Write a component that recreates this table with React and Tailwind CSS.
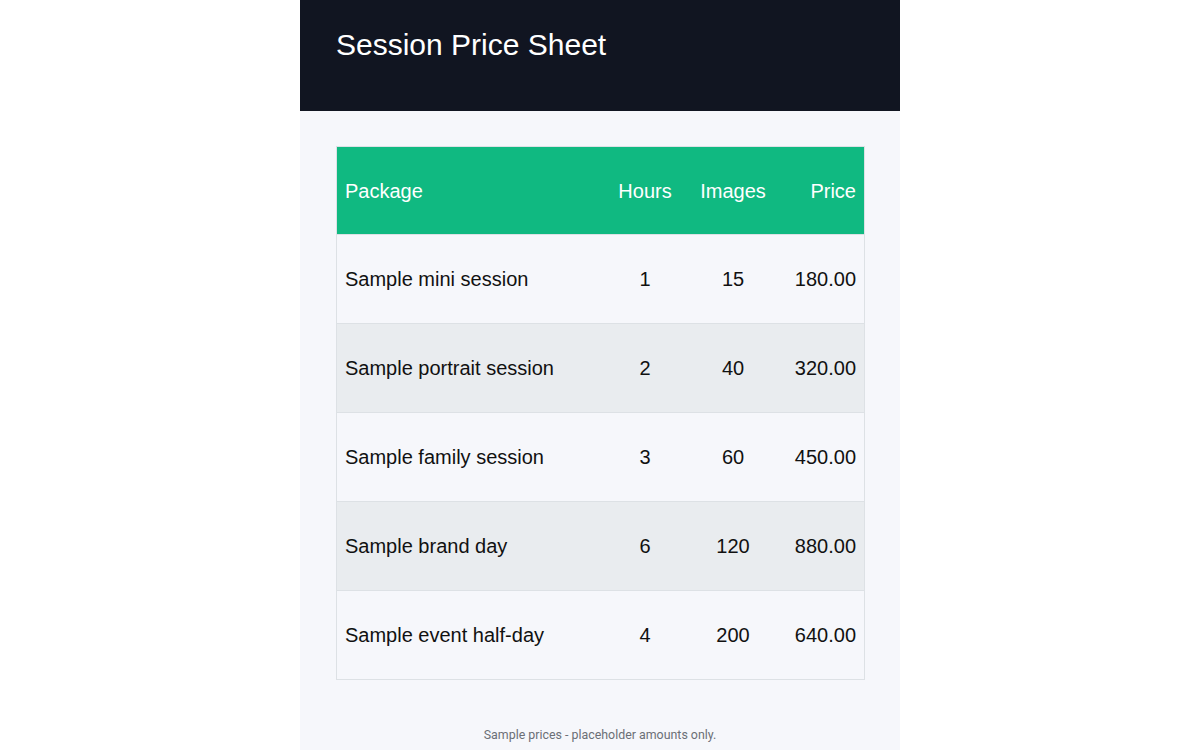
import React from "react";

const rows = [
  { name: "Sample mini session", hours: "1", images: "15", price: "180.00" },
  { name: "Sample portrait session", hours: "2", images: "40", price: "320.00" },
  { name: "Sample family session", hours: "3", images: "60", price: "450.00" },
  { name: "Sample brand day", hours: "6", images: "120", price: "880.00" },
  { name: "Sample event half-day", hours: "4", images: "200", price: "640.00" },
];

const App = () => {
  return (
    <div className="min-h-screen bg-white font-['Liberation_Sans',Arial,sans-serif]">
      <div className="mx-auto w-[600px] bg-[#f6f7fb] min-h-[800px]">
        <header className="bg-[#111521] h-[111px] px-9 pt-[26px]">
          <h1 className="text-white text-[30px] leading-[38px]">Session Price Sheet</h1>
        </header>

        <div className="px-9 pt-[35px]">
          <table className="w-full border-collapse border border-[#dde1e5] table-fixed text-xl">
            <colgroup>
              <col className="w-[264px]" />
              <col className="w-[89px]" />
              <col className="w-[87px]" />
              <col className="w-[88px]" />
            </colgroup>
            <thead>
              <tr className="bg-[#10b981] text-white h-[88px]">
                <th className="font-normal text-left px-2">Package</th>
                <th className="font-normal text-center px-2">Hours</th>
                <th className="font-normal text-center px-2">Images</th>
                <th className="font-normal text-right px-2">Price</th>
              </tr>
            </thead>
            <tbody className="text-[#111111]">
              {rows.map((row, i) => (
                <tr
                  key={row.name}
                  className={
                    "h-[89px] border-t border-[#dde1e5] " +
                    (i % 2 === 1 ? "bg-[#e9ecef]" : "bg-[#f6f7fb]")
                  }
                >
                  <td className="text-left px-2">{row.name}</td>
                  <td className="text-center px-2">{row.hours}</td>
                  <td className="text-center px-2">{row.images}</td>
                  <td className="text-right px-2">{row.price}</td>
                </tr>
              ))}
            </tbody>
          </table>

          <p className="mt-[46px] text-center text-[12.4px] text-[#6b6f76] font-['Roboto',sans-serif]">
            Sample prices - placeholder amounts only.
          </p>
        </div>
      </div>
    </div>
  );
};

export default App;
